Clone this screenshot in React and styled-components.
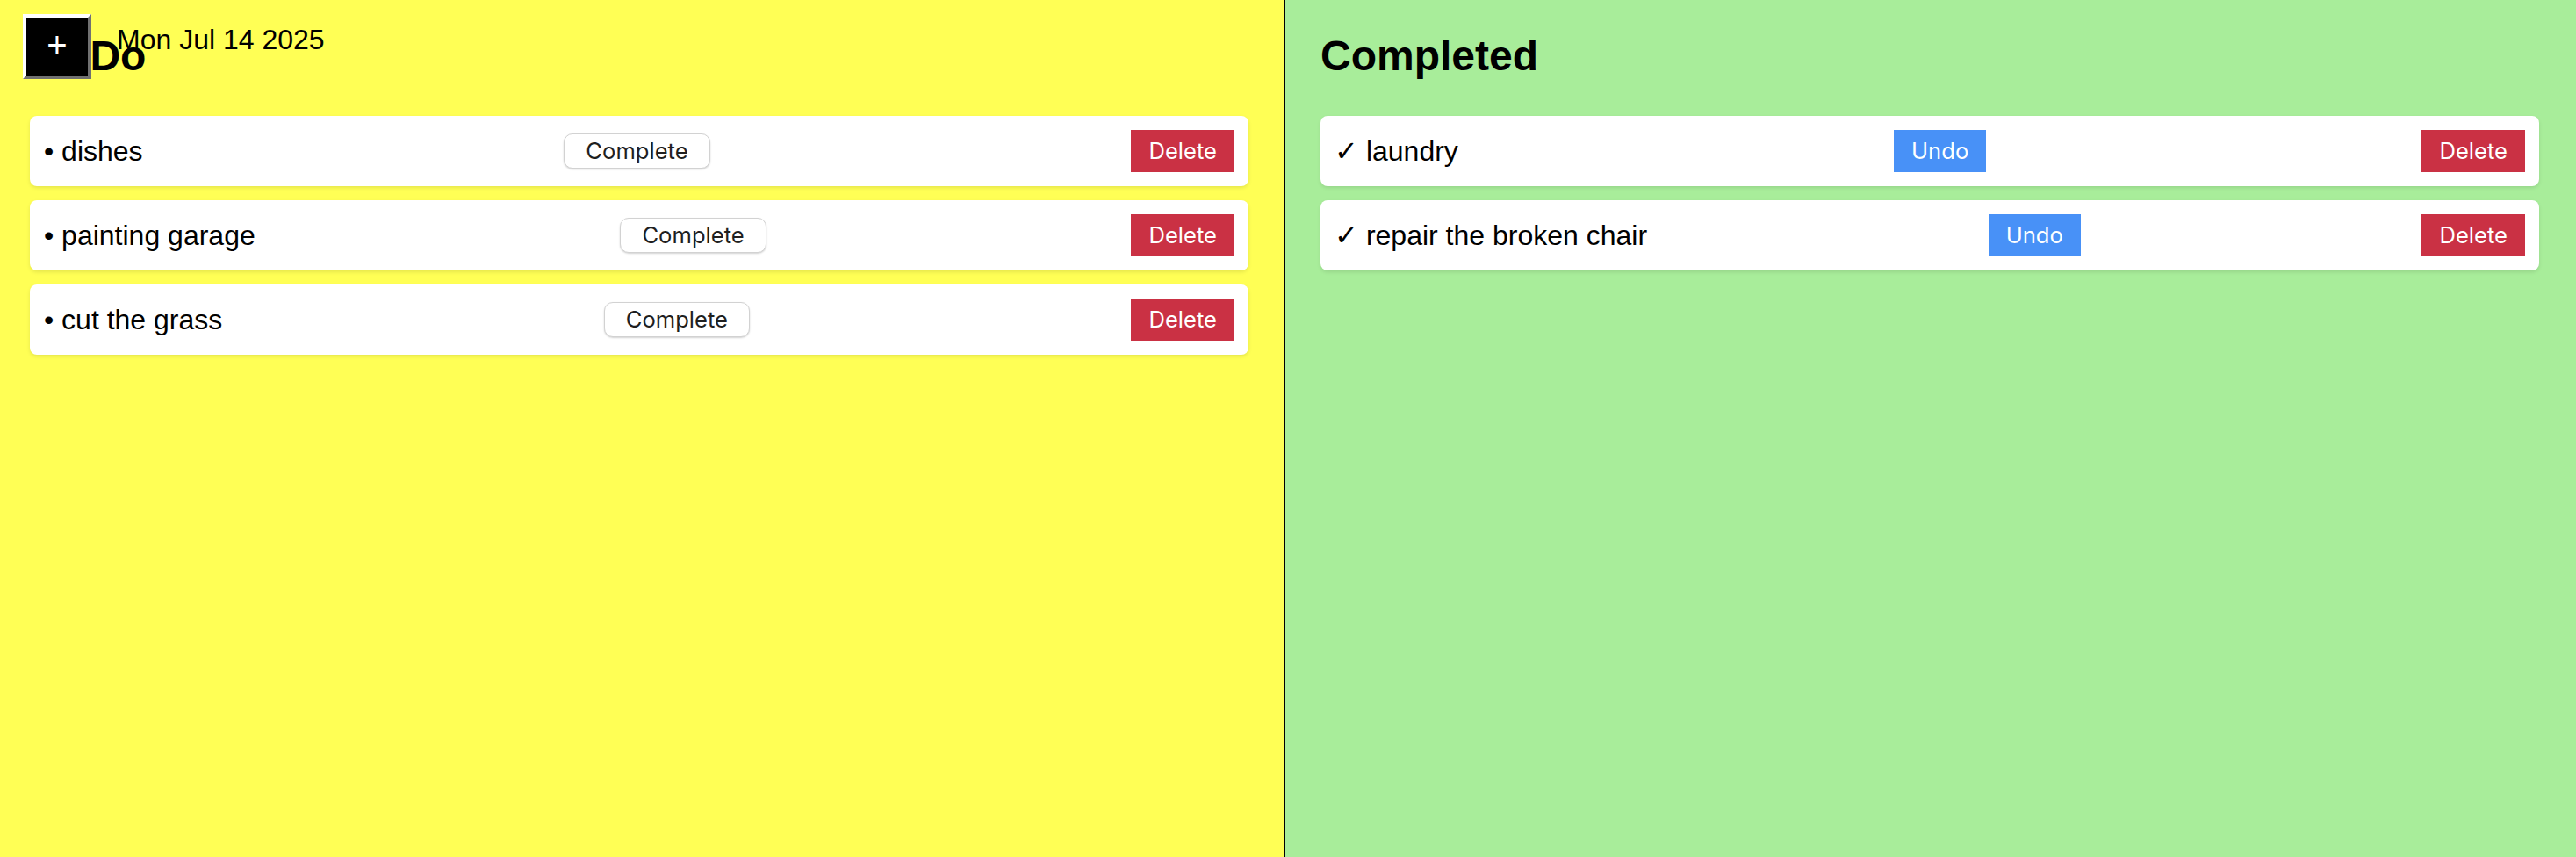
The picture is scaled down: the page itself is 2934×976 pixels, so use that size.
import React, { useState } from "react";
import styled, { createGlobalStyle } from "styled-components";

const GlobalStyle = createGlobalStyle`
  html, body {
    margin: 0;
    padding: 0;
  }
  body {
    font-family: "Liberation Sans", Arial, sans-serif;
    color: #000;
  }
`;

const initialTodos = [
  { id: 1, text: "dishes", done: false },
  { id: 2, text: "painting garage", done: false },
  { id: 3, text: "cut the grass", done: false },
  { id: 4, text: "laundry", done: true },
  { id: 5, text: "repair the broken chair", done: true },
];

const App = () => {
  const [todos, setTodos] = useState(initialTodos);

  function toggle(id) {
    setTodos((prev) =>
      prev.map((t) => (t.id === id ? { ...t, done: !t.done } : t))
    );
  }

  function remove(id) {
    setTodos((prev) => prev.filter((t) => t.id !== id));
  }

  function addTodo() {
    const text = window.prompt("New task");
    if (!text) return;
    setTodos((prev) => [...prev, { id: Date.now(), text, done: false }]);
  }

  const open = todos.filter((t) => !t.done);
  const done = todos.filter((t) => t.done);

  return (
    <>
      <GlobalStyle />
      <Board>
        <Column $bg="#ffff55" $padLeft={34} $padRight={40} $divider>
          <Toolbar>
            <AddButton onClick={addTodo}>+</AddButton>
            <DateLabel>Mon Jul 14 2025</DateLabel>
          </Toolbar>
          <Heading>To Do</Heading>
          <List>
            {open.map((t) => (
              <Card key={t.id}>
                <ItemText>• {t.text}</ItemText>
                <CompleteButton onClick={() => toggle(t.id)}>
                  Complete
                </CompleteButton>
                <FlatButton $tone="#ca3144" onClick={() => remove(t.id)}>
                  Delete
                </FlatButton>
              </Card>
            ))}
          </List>
        </Column>

        <Column $bg="#a8ed9a" $padLeft={40} $padRight={42}>
          <Heading>Completed</Heading>
          <List>
            {done.map((t) => (
              <Card key={t.id}>
                <ItemText>✓ {t.text}</ItemText>
                <FlatButton $tone="#4891f7" onClick={() => toggle(t.id)}>
                  Undo
                </FlatButton>
                <FlatButton $tone="#ca3144" onClick={() => remove(t.id)}>
                  Delete
                </FlatButton>
              </Card>
            ))}
          </List>
        </Column>
      </Board>
    </>
  );
};

export default App;

const Board = styled.div`
  display: flex;
  min-height: 100vh;
`;

const Column = styled.section`
  position: relative;
  box-sizing: border-box;
  background: ${(p) => p.$bg};
  padding: 0 ${(p) => p.$padRight}px 0 ${(p) => p.$padLeft}px;
  ${(p) =>
    p.$divider
      ? `
    flex: 0 0 1464px;
    border-right: 2px solid #000;
  `
      : `
    flex: 1;
  `}
`;

const Toolbar = styled.div`
  position: absolute;
  top: 16px;
  left: 26px;
  display: flex;
  align-items: flex-start;
  z-index: 1;
`;

const AddButton = styled.button`
  box-sizing: border-box;
  width: 78px;
  height: 74px;
  padding: 0 0 4px;
  background: #000;
  color: #fff;
  border-style: solid;
  border-width: 4px;
  border-color: #ffffff #707070 #707070 #ffffff;
  font-family: "Liberation Sans", Arial, sans-serif;
  font-size: 40px;
  line-height: 1;
  cursor: pointer;
`;

const DateLabel = styled.span`
  margin: 11px 0 0 29px;
  font-size: 32px;
  line-height: 36px;
  white-space: nowrap;
`;

const Heading = styled.h1`
  margin: 37px 0 41px;
  font-size: 48px;
  line-height: 54px;
  font-weight: 700;
`;

const List = styled.ul`
  list-style: none;
  margin: 0;
  padding: 0;
  display: flex;
  flex-direction: column;
  gap: 16px;
`;

const Card = styled.li`
  box-sizing: border-box;
  height: 80px;
  padding: 0 16px;
  display: flex;
  align-items: center;
  justify-content: space-between;
  background: #fff;
  border-radius: 8px;
  box-shadow: 0 2px 4px rgba(0, 0, 0, 0.1);
`;

const ItemText = styled.span`
  font-size: 32px;
  line-height: 36px;
  white-space: nowrap;
`;

const CompleteButton = styled.button`
  box-sizing: border-box;
  height: 40px;
  padding: 0 24px;
  background: #fff;
  color: #1f1f1f;
  border: 1px solid #d2d2d2;
  border-radius: 10px;
  box-shadow: 0 1px 2px rgba(0, 0, 0, 0.18);
  font-family: Inter, "Noto Sans", sans-serif;
  font-size: 25.6px;
  line-height: 1;
  cursor: pointer;
`;

const FlatButton = styled.button`
  box-sizing: border-box;
  height: 48px;
  padding: 0 20px;
  background: ${(p) => p.$tone};
  color: #fff;
  border: none;
  border-radius: 0;
  font-family: Inter, "Noto Sans", sans-serif;
  font-size: 25.6px;
  line-height: 1;
  cursor: pointer;
`;
